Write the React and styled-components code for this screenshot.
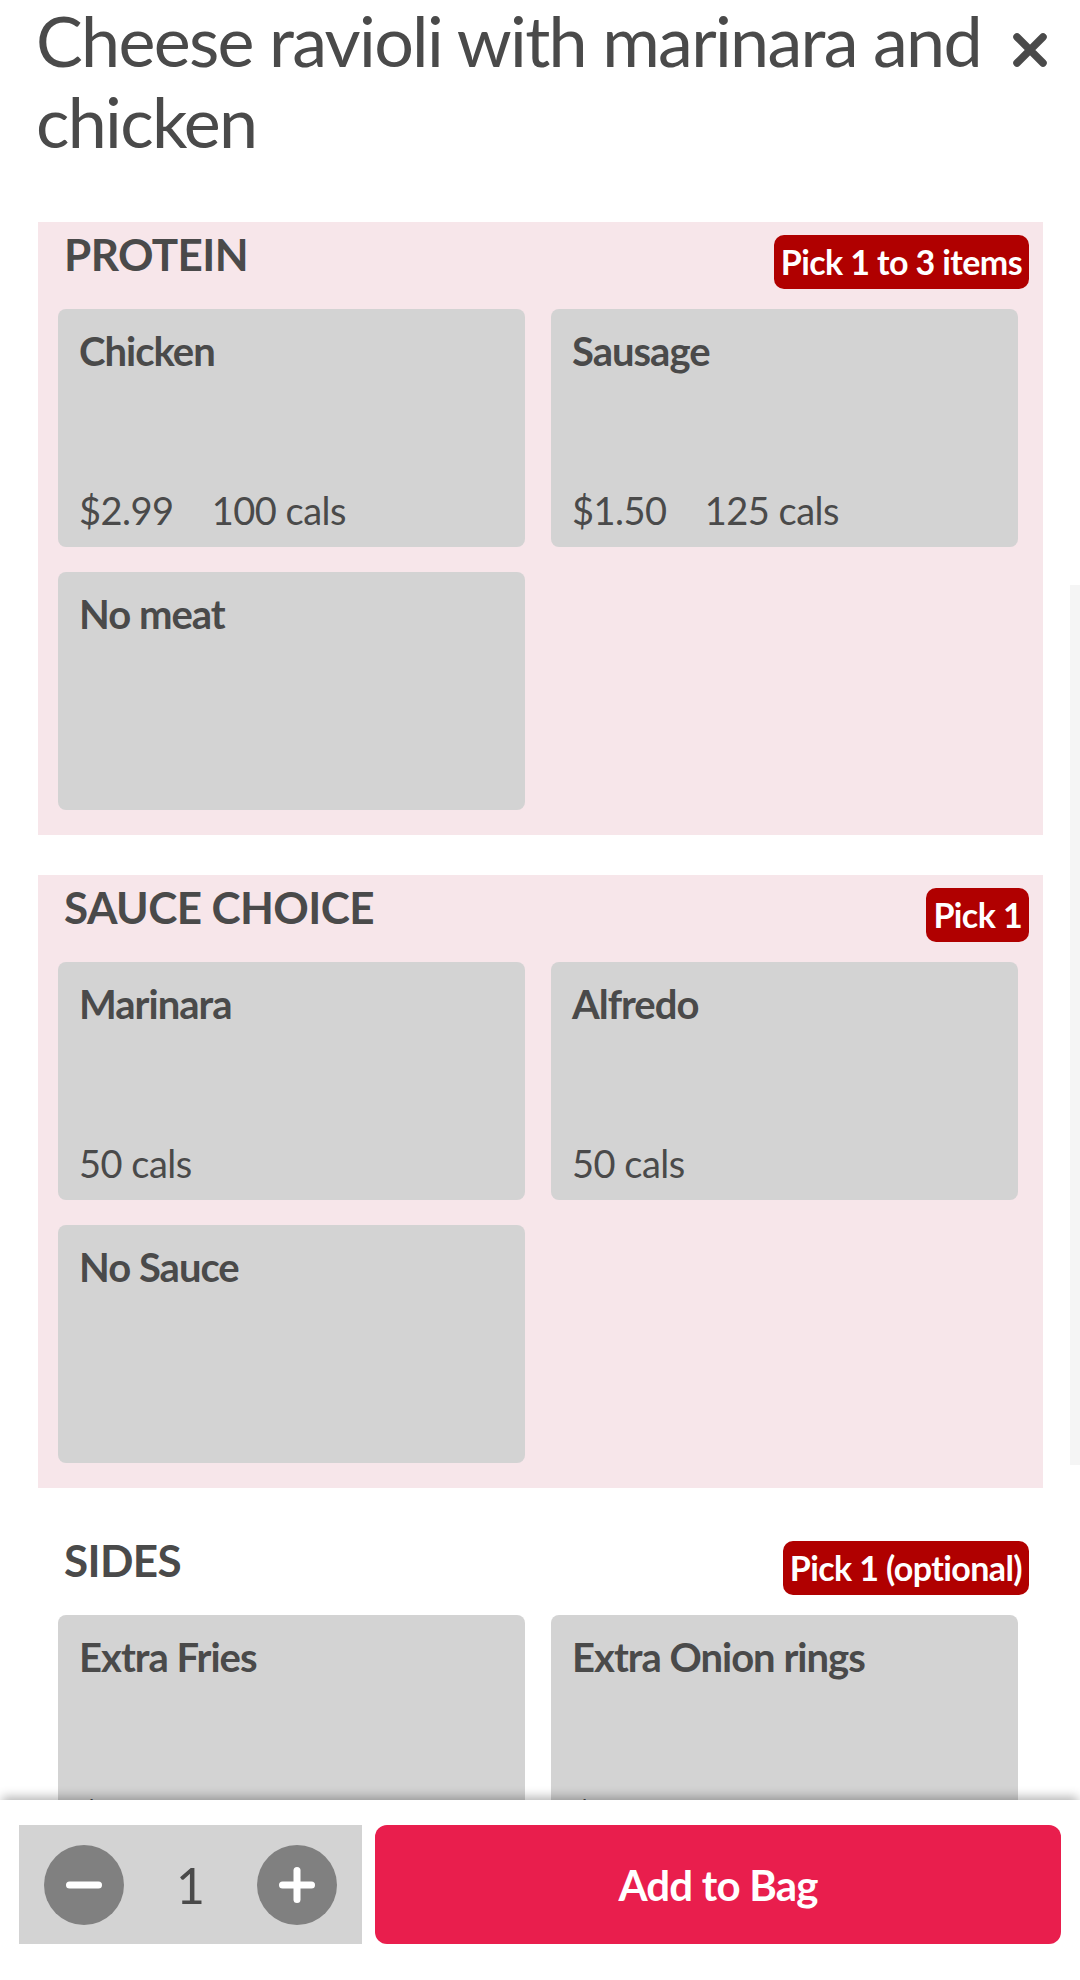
import React, { useState } from "react";
import styled, { createGlobalStyle } from "styled-components";

const GlobalStyle = createGlobalStyle`
  html, body {
    margin: 0;
    padding: 0;
    background: #ffffff;
    overflow: hidden;
  }
  body {
    font-family: Lato, "Noto Sans", Arial, sans-serif;
    color: #4a4a4a;
  }
  * {
    box-sizing: border-box;
  }
`;

const sections = [
  {
    title: "PROTEIN",
    rule: "Pick 1 to 3 items",
    tinted: true,
    options: [
      { name: "Chicken", price: "$2.99", cals: "100 cals" },
      { name: "Sausage", price: "$1.50", cals: "125 cals" },
      { name: "No meat" },
    ],
  },
  {
    title: "SAUCE CHOICE",
    rule: "Pick 1",
    tinted: true,
    options: [
      { name: "Marinara", cals: "50 cals" },
      { name: "Alfredo", cals: "50 cals" },
      { name: "No Sauce" },
    ],
  },
  {
    title: "SIDES",
    rule: "Pick 1 (optional)",
    tinted: false,
    options: [
      { name: "Extra Fries", price: "$1.99", cals: "320 cals" },
      { name: "Extra Onion rings", price: "$2.49", cals: "410 cals" },
    ],
  },
];

function CloseIcon() {
  return (
    <svg width="36" height="36" viewBox="0 0 36 36">
      <path
        d="M5 5 L31 31 M31 5 L5 31"
        stroke="#4a4a4a"
        strokeWidth="7.5"
        strokeLinecap="round"
      />
    </svg>
  );
}

function StepIcon({ plus }) {
  return (
    <svg width="80" height="80" viewBox="0 0 80 80">
      <circle cx="40" cy="40" r="40" fill="#808080" />
      <path d="M25.5 40 H54.5" stroke="#fff" strokeWidth="7" strokeLinecap="round" />
      {plus && (
        <path d="M40 25.5 V54.5" stroke="#fff" strokeWidth="7" strokeLinecap="round" />
      )}
    </svg>
  );
}

function OptionCard({ option }) {
  return (
    <Card>
      <CardName>{option.name}</CardName>
      {(option.price || option.cals) && (
        <CardMeta>
          {option.price && <span>{option.price}</span>}
          {option.cals && <span>{option.cals}</span>}
        </CardMeta>
      )}
    </Card>
  );
}

function OptionSection({ section }) {
  return (
    <Section $tinted={section.tinted}>
      <SectionHeader>
        <Heading>{section.title}</Heading>
        <Badge>{section.rule}</Badge>
      </SectionHeader>
      <CardGrid>
        {section.options.map((opt) => (
          <OptionCard key={opt.name} option={opt} />
        ))}
      </CardGrid>
    </Section>
  );
}

export default function App() {
  const [qty, setQty] = useState(1);

  return (
    <>
      <GlobalStyle />
      <Page>
        <TitleRow>
          <Title>Cheese ravioli with marinara and chicken</Title>
          <CloseButton aria-label="Close">
            <CloseIcon />
          </CloseButton>
        </TitleRow>

        <SectionList>
          {sections.map((section) => (
            <OptionSection key={section.title} section={section} />
          ))}
        </SectionList>
      </Page>

      <ScrollThumb />

      <BottomBar>
        <QtyBox>
          <StepButton onClick={() => setQty((q) => Math.max(1, q - 1))}>
            <StepIcon />
          </StepButton>
          <Qty>{qty}</Qty>
          <StepButton onClick={() => setQty((q) => q + 1)}>
            <StepIcon plus />
          </StepButton>
        </QtyBox>
        <AddButton>Add to Bag</AddButton>
      </BottomBar>
    </>
  );
}

const Page = styled.div`
  width: 1080px;
  padding: 0 37px 260px 36px;
`;

const TitleRow = styled.div`
  display: flex;
  align-items: flex-start;
  justify-content: space-between;
  gap: 12px;
`;

const Title = styled.h1`
  margin: 0;
  font-size: 70px;
  font-weight: 400;
  line-height: 81px;
  letter-spacing: -1.7px;
  color: #4a4a4a;
  max-width: 962px;
`;

const CloseButton = styled.button`
  border: none;
  background: none;
  padding: 0;
  margin-top: 32px;
  margin-right: -5px;
  width: 36px;
  height: 36px;
  display: flex;
  cursor: pointer;
`;

const SectionList = styled.div`
  margin-top: 60px;
  display: flex;
  flex-direction: column;
  gap: 40px;
`;

const Section = styled.section`
  margin-left: 2px;
  background: ${(props) => (props.$tinted ? "#f7e6ea" : "transparent")};
  padding: 13px 14px 25px 20px;
`;

const SectionHeader = styled.div`
  display: flex;
  justify-content: space-between;
  align-items: flex-start;
  padding-left: 6px;
  height: 54px;
  margin-bottom: 20px;
`;

const Heading = styled.h2`
  margin: 0;
  font-size: 44px;
  font-weight: 700;
  line-height: 38px;
  letter-spacing: -0.6px;
  color: #4a4a4a;
`;

const Badge = styled.span`
  height: 54px;
  padding: 0 7px;
  border-radius: 10px;
  background: #b00000;
  color: #ffffff;
  font-size: 34px;
  font-weight: 700;
  line-height: 54px;
  letter-spacing: -0.6px;
  white-space: nowrap;
`;

const CardGrid = styled.div`
  display: grid;
  grid-template-columns: 467px 467px;
  column-gap: 26px;
  row-gap: 25px;
`;

const Card = styled.div`
  height: 238px;
  border-radius: 8px;
  background: #d3d3d3;
  padding: 18px 21px 14px;
  display: flex;
  flex-direction: column;
  justify-content: space-between;
`;

const CardName = styled.div`
  font-size: 40px;
  font-weight: 700;
  line-height: 48px;
  letter-spacing: -1px;
  color: #4a4a4a;
`;

const CardMeta = styled.div`
  display: flex;
  gap: 38px;
  font-size: 38px;
  font-weight: 400;
  line-height: 46px;
  letter-spacing: -0.5px;
  color: #4a4a4a;
`;

const ScrollThumb = styled.div`
  position: fixed;
  top: 585px;
  right: 0;
  width: 10px;
  height: 880px;
  background: #f5f5f5;
`;

const BottomBar = styled.div`
  position: fixed;
  left: 0;
  bottom: 0;
  width: 1080px;
  height: 180px;
  background: #ffffff;
  box-shadow: 0 -5px 10px -2px rgba(0, 0, 0, 0.3);
  display: flex;
  gap: 13px;
  padding: 25px 19px 0;
  align-items: flex-start;
`;

const QtyBox = styled.div`
  width: 343px;
  height: 119px;
  background: #d3d3d3;
  display: flex;
  align-items: center;
  justify-content: space-between;
  padding: 0 25px;
`;

const StepButton = styled.button`
  border: none;
  background: none;
  padding: 0;
  width: 80px;
  height: 80px;
  display: flex;
  cursor: pointer;
`;

const Qty = styled.span`
  font-size: 50px;
  font-weight: 400;
  color: #4a4a4a;
  line-height: 1;
`;

const AddButton = styled.button`
  flex: 1;
  height: 119px;
  border: none;
  border-radius: 12px;
  background: #e91e4d;
  color: #ffffff;
  font-family: Lato, "Noto Sans", Arial, sans-serif;
  font-size: 42px;
  font-weight: 700;
  letter-spacing: -0.8px;
  cursor: pointer;
`;
